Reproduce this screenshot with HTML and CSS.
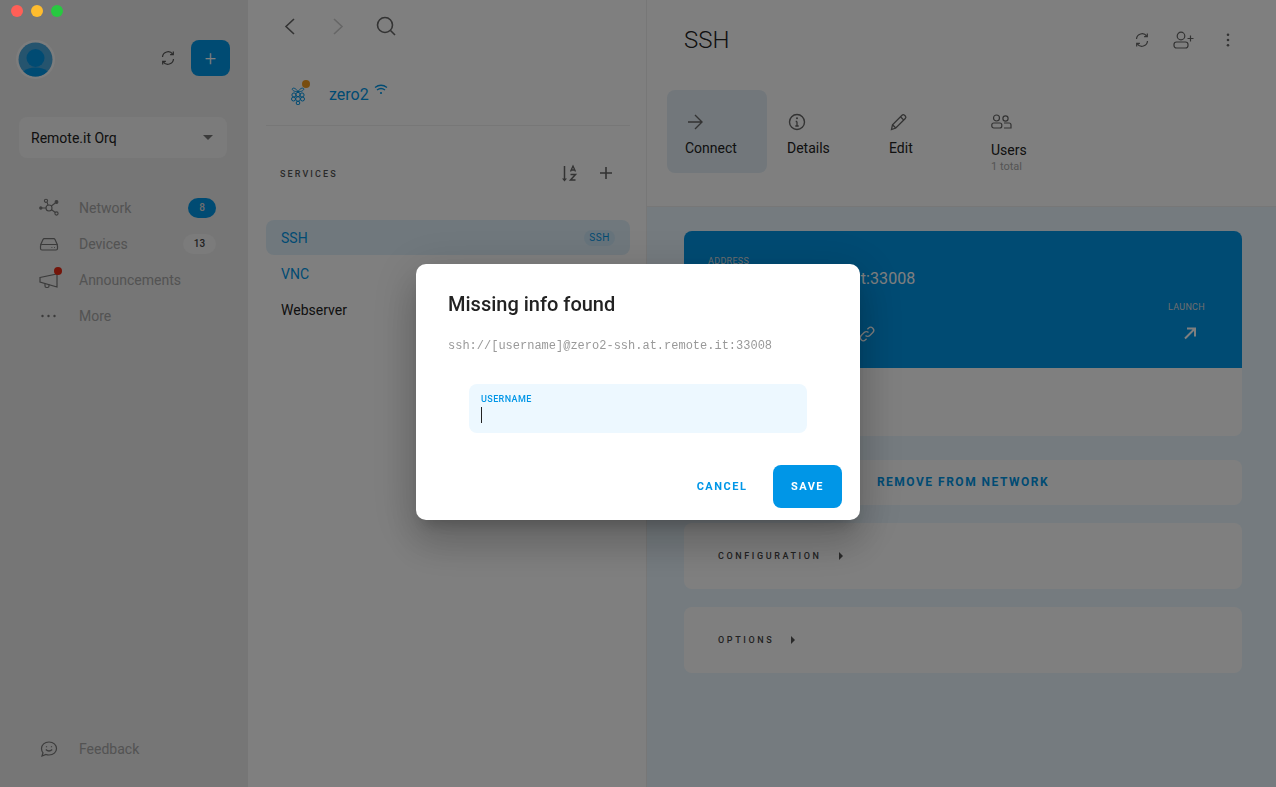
FILE: index.html
```html
<!DOCTYPE html>
<html lang="en">
<head>
  <meta charset="UTF-8" />
  <meta name="viewport" content="width=device-width, initial-scale=1.0" />
  <title>Remote.It</title>
  <link rel="stylesheet" href="styles.css">
</head>
<body>
  <div class="app">
    <aside class="sidebar">
      <div class="side-top">
        <svg class="avatar" width="39" height="39" viewBox="0 0 39 39">
          <circle cx="19.500" cy="19.500" r="19.500" fill="#fff" fill-opacity=".8"/>
          <circle cx="19.500" cy="19.500" r="17" fill="#4aa8dc"/>
          <circle cx="19.500" cy="18" r="9" fill="#0096e7"/>
          <path d="M7.500 31.500c3-3 7-4 12-4s9 1 12 4a17 17 0 0 1-24 0z" fill="#0096e7"/>
        </svg>
        <svg class="ico refresh" width="16" height="16" viewBox="0 0 16 16" fill="none" stroke="#555" stroke-width="1.200">
          <path d="M2.500 7A5.600 5.600 0 0 1 12.700 4.200M13.500 9A5.600 5.600 0 0 1 3.300 11.800"/>
          <path d="M13.300 1.500v3.200h-3.200M2.700 14.500v-3.200h3.200"/>
        </svg>
        <button class="add-btn">+</button>
      </div>

      <div class="org-select">
        <span>Remote.it Orq</span>
        <span class="caret-down"></span>
      </div>

      <nav class="side-nav">
        <div class="nav-row">
          <svg class="nav-ico" width="20" height="20" viewBox="0 0 20 20" fill="none" stroke="#777" stroke-width="1.100">
            <circle cx="10" cy="10" r="3"/><circle cx="1.800" cy="10" r="1.100" fill="#777"/><circle cx="7" cy="2.800" r="1.600"/><circle cx="17.500" cy="4" r="1.400" fill="#777"/><circle cx="17.500" cy="15.500" r="1.600"/>
            <path d="M3 10h4M8 4.200l1 3M16.300 5l-4 3M16.300 14.500l-4-3"/>
          </svg>
          <span class="nav-label">Network</span>
          <span class="badge badge-blue">8</span>
        </div>
        <div class="nav-row">
          <svg class="nav-ico" width="20" height="20" viewBox="0 0 20 20" fill="none" stroke="#777" stroke-width="1.200">
            <path d="M1.500 11l2.500-5.500q.4-.8 1.300-.8h9.400q.9 0 1.300.8l2.500 5.500"/>
            <rect x="1.500" y="10.500" width="17" height="5.500" rx="1.500"/>
            <path d="M12.500 13.500h.8M15 13.500h.8"/>
          </svg>
          <span class="nav-label">Devices</span>
          <span class="badge badge-gray">13</span>
        </div>
        <div class="nav-row">
          <span class="nav-ico-wrap">
            <svg class="nav-ico" width="20" height="20" viewBox="0 0 20 20" fill="none" stroke="#777" stroke-width="1.200">
              <path d="M1 7.500l17-3.500v13L1 12z"/><path d="M6 13.500v2.500q0 1.500 1.500 1.500h1q1.500 0 1.500-1.500v-1.500"/>
            </svg>
            <span class="red-dot"></span>
          </span>
          <span class="nav-label">Announcements</span>
        </div>
        <div class="nav-row">
          <svg class="nav-ico" width="20" height="20" viewBox="0 0 20 20" fill="#777">
            <circle cx="3.500" cy="10" r="1.200"/><circle cx="9.500" cy="10" r="1.200"/><circle cx="15.500" cy="10" r="1.200"/>
          </svg>
          <span class="nav-label">More</span>
        </div>
      </nav>

      <div class="nav-row side-bottom">
        <svg class="nav-ico" width="20" height="20" viewBox="0 0 20 20" fill="none" stroke="#777" stroke-width="1.200">
          <path d="M10 3c4.400 0 7.500 2.800 7.500 6.500S14.400 16 10 16q-1.600 0-3-.5L3 17l1-3.200Q2.500 12 2.500 9.500C2.500 5.800 5.600 3 10 3z"/>
          <path d="M6.800 10.500q3.200 3 6.400 0"/><path d="M7.500 7.300v1M12.500 7.300v1"/>
        </svg>
        <span class="nav-label">Feedback</span>
      </div>
    </aside>

    <section class="middle">
      <div class="top-nav">
        <span class="nav-btn">
          <svg width="24" height="24" viewBox="0 0 24 24" fill="none" stroke="#666" stroke-width="1.600"><path d="M16 5l-8 7.500 8 7.500"/></svg>
        </span>
        <span class="nav-btn">
          <svg width="24" height="24" viewBox="0 0 24 24" fill="none" stroke="#ccc" stroke-width="1.600"><path d="M8 5l8 7.500-8 7.500"/></svg>
        </span>
        <span class="nav-btn">
          <svg width="24" height="24" viewBox="0 0 24 24" fill="none" stroke="#666" stroke-width="1.600"><circle cx="11" cy="11" r="7.500"/><path d="M16.500 16.500l4.500 4.500"/></svg>
        </span>
      </div>

      <div class="device-row">
        <span class="device-ico">
          <svg width="16" height="20" viewBox="0 0 16 20" fill="none" stroke="#0096e7" stroke-width="1">
            <path d="M8 6.500C6 3.500 3.500 2.500 2.500 3.500S3.500 7 8 6.500zM8 6.500c2-3 4.500-4 5.500-3S12.500 7 8 6.500z"/>
            <circle cx="8" cy="9.500" r="2.200"/><circle cx="4" cy="10" r="2.100"/><circle cx="12" cy="10" r="2.100"/>
            <circle cx="3.500" cy="14" r="2"/><circle cx="12.500" cy="14" r="2"/><circle cx="8" cy="14" r="2.300"/><circle cx="8" cy="18" r="1.800"/>
          </svg>
          <span class="amber-dot"></span>
        </span>
        <span class="device-name">zero2</span>
        <svg class="wifi" width="14" height="12" viewBox="0 0 14 12" fill="none" stroke="#0096e7" stroke-width="1.400">
          <path d="M1 3.500Q7-1 13 3.500M3 6q4-3 8 0"/><circle cx="7" cy="9" r="1.100" fill="#0096e7" stroke="none"/>
        </svg>
      </div>
      <div class="divider"></div>

      <div class="services-head">
        <span class="services-title">SERVICES</span>
        <span class="services-tools">
          <svg width="24" height="24" viewBox="0 0 24 24" fill="none" stroke="#666" stroke-width="1.500">
            <path d="M7.500 5v13"/><path d="M5 17.500h5L7.500 20.500z" fill="#666" stroke="none"/>
            <path d="M13.500 10.500l2.500-5.500 2.500 5.500M14.300 9h3.400" stroke-width="1.300"/>
            <path d="M13.500 13.500h5l-5 5.500h5" stroke-width="1.500"/>
          </svg>
          <svg width="24" height="24" viewBox="0 0 24 24" fill="none" stroke="#666" stroke-width="1.600"><path d="M12 6v12M6 12h12"/></svg>
        </span>
      </div>

      <ul class="service-list">
        <li class="service active"><span>SSH</span><span class="chip">SSH</span></li>
        <li class="service link"><span>VNC</span></li>
        <li class="service"><span>Webserver</span></li>
      </ul>
    </section>

    <main class="detail">
      <header class="detail-head">
        <div class="title-row">
          <h1>SSH</h1>
          <div class="title-tools">
            <svg class="ico" width="16" height="16" viewBox="0 0 16 16" fill="none" stroke="#666" stroke-width="1.200">
              <path d="M2.500 7A5.600 5.600 0 0 1 12.700 4.200M13.500 9A5.600 5.600 0 0 1 3.300 11.800"/>
              <path d="M13.300 1.500v3.200h-3.200M2.700 14.500v-3.200h3.200"/>
            </svg>
            <svg class="ico" width="22" height="18" viewBox="0 0 22 18" fill="none" stroke="#666" stroke-width="1.200">
              <circle cx="8" cy="5" r="3.800"/><rect x="1" y="11" width="14" height="6" rx="2.500"/><path d="M17.500 4.500v6M14.500 7.500h6"/>
            </svg>
            <svg class="ico more-ico" width="16" height="16" viewBox="0 0 16 16" fill="#666">
              <circle cx="8" cy="2.800" r="1.300"/><circle cx="8" cy="8" r="1.300"/><circle cx="8" cy="13.200" r="1.300"/>
            </svg>
          </div>
        </div>
        <div class="tabs">
          <div class="tab selected">
            <svg width="24" height="24" viewBox="0 0 24 24" fill="none" stroke="#666" stroke-width="1.400"><path d="M3 12h13.500M10 5l7 7-7 7"/></svg>
            <span class="tab-label">Connect</span>
          </div>
          <div class="tab">
            <svg width="24" height="24" viewBox="0 0 24 24" fill="none" stroke="#666" stroke-width="1.400"><circle cx="10" cy="12" r="7.500"/><path d="M10 11.500v4.500M8.300 16h3.400M8.700 11.500H10" stroke-width="1.300"/><circle cx="10" cy="8.300" r="1" fill="#666" stroke="none"/></svg>
            <span class="tab-label">Details</span>
          </div>
          <div class="tab">
            <svg width="24" height="24" viewBox="0 0 24 24" fill="none" stroke="#666" stroke-width="1.300"><path d="M2.500 19.500l1-4.800L13 5.200q1.200-1.200 2.500 0l.8.800q1.200 1.300 0 2.500L6.800 18z"/><path d="M11.500 6.800l3.300 3.300M3.500 14.800l3.300 3.200"/></svg>
            <span class="tab-label">Edit</span>
          </div>
          <div class="tab">
            <svg width="24" height="24" viewBox="0 0 24 24" fill="none" stroke="#666" stroke-width="1.200"><circle cx="5.500" cy="8" r="3"/><circle cx="14.500" cy="8.500" r="2.600"/><rect x=".8" y="13" width="10" height="5" rx="2"/><path d="M13 13h5q2 0 2 2v3h-7"/></svg>
            <span class="tab-label users-label">Users</span>
            <span class="tab-sub">1 total</span>
          </div>
        </div>
      </header>

      <div class="detail-body">
        <div class="conn-card">
          <div class="conn-head">
            <span class="conn-small">ADDRESS</span>
            <span class="conn-address">zero2-ssh.at.remote.it:33008</span>
            <div class="conn-actions">
              <svg class="link-ico" width="18" height="18" viewBox="0 0 18 18" fill="none" stroke="#fff" stroke-width="1.300">
                <path d="M7.500 10.500a3 3 0 0 0 4.300 0l3-3a3 3 0 0 0-4.300-4.300L9.400 4.300"/>
                <path d="M10.500 7.500a3 3 0 0 0-4.300 0l-3 3a3 3 0 0 0 4.300 4.300l1.100-1.100"/>
              </svg>
              <div class="launch">
                <span class="conn-small">LAUNCH</span>
                <svg width="14" height="14" viewBox="0 0 14 14" fill="none" stroke="#fff" stroke-width="2"><path d="M2 12.500L12 2.500M4 2.500h8v8"/></svg>
              </div>
            </div>
          </div>
          <div class="conn-foot"></div>
        </div>

        <div class="card card-action">REMOVE FROM NETWORK</div>
        <div class="card card-section"><span>CONFIGURATION</span><span class="caret-right"></span></div>
        <div class="card card-section"><span>OPTIONS</span><span class="caret-right"></span></div>
      </div>
    </main>
  </div>

  <div class="backdrop">
    <div class="dialog">
      <h2>Missing info found</h2>
      <p class="dialog-url">ssh://[username]@zero2-ssh.at.remote.it:33008</p>
      <div class="field">
        <label>USERNAME</label>
        <span class="text-caret"></span>
      </div>
      <div class="dialog-actions">
        <button class="btn-text">CANCEL</button>
        <button class="btn-save">SAVE</button>
      </div>
    </div>
  </div>

  <div class="traffic">
    <span class="light red"></span>
    <span class="light yellow"></span>
    <span class="light green"></span>
  </div>
</body>
</html>
```

FILE: styles.css
```css
* {
  margin: 0;
  padding: 0;
  box-sizing: border-box;
  font-family: Roboto, 'Liberation Sans', sans-serif;
}

body {
  height: 100vh;
  overflow: hidden;
  background: white;
  color: #222;
}

button {
  border: none;
  cursor: pointer;
}

ul {
  list-style: none;
}

svg {
  display: block;
  flex-shrink: 0;
}

.app {
  display: flex;
  height: 100vh;
}

/* Sidebar */
.sidebar {
  width: 248px;
  flex-shrink: 0;
  display: flex;
  flex-direction: column;
  background: #ececec;
}

.side-top {
  display: flex;
  align-items: center;
  height: 36px;
  margin-top: 40px;
  padding: 0 18px 0 16px;
}

.avatar {
  margin: 3px auto 0 0;
}

.refresh {
  margin-right: 15px;
}

.add-btn {
  width: 39px;
  height: 36px;
  border-radius: 8px;
  background: #0096e7;
  color: white;
  font-size: 20px;
  font-weight: 300;
  line-height: 36px;
}

.org-select {
  display: flex;
  align-items: center;
  justify-content: space-between;
  width: 208px;
  height: 41px;
  margin: 41px 0 0 19px;
  padding: 0 14px 0 12px;
  border-radius: 8px;
  background: #f6f6f6;
  font-size: 14px;
  color: #222;
}

.caret-down {
  width: 0;
  height: 0;
  border-left: 5px solid transparent;
  border-right: 5px solid transparent;
  border-top: 5px solid #777;
}

.side-nav {
  margin-top: 32px;
}

.nav-row {
  display: flex;
  align-items: center;
  height: 36px;
  padding: 0 32px 0 39px;
}

.nav-ico-wrap {
  position: relative;
  display: block;
}

.nav-label {
  margin-left: 20px;
  font-size: 14px;
  color: #a6a6a6;
}

.badge {
  margin-left: auto;
  height: 20px;
  border-radius: 10px;
  font-size: 10px;
  font-weight: 500;
  line-height: 20px;
  text-align: center;
}

.badge-blue {
  width: 28px;
  background: #0096e7;
  color: #ddd;
}

.badge-gray {
  width: 33px;
  background: #f6f6f6;
  color: #444;
}

.red-dot {
  position: absolute;
  top: -3px;
  right: -3px;
  width: 8px;
  height: 8px;
  border-radius: 50%;
  background: #e82a14;
}

.side-bottom {
  margin-top: auto;
  margin-bottom: 20px;
}

/* Service list column */
.middle {
  width: 399px;
  flex-shrink: 0;
  padding: 0 16px 0 18px;
  background: white;
  border-right: 1px solid #eee;
}

.top-nav {
  display: flex;
  height: 52px;
}

.nav-btn {
  display: flex;
  align-items: center;
  justify-content: center;
  width: 48px;
  height: 52px;
}

.device-row {
  display: flex;
  align-items: center;
  height: 44px;
  margin-top: 20px;
  padding-left: 24px;
}

.device-ico {
  position: relative;
  display: block;
  margin-top: 2px;
}

.amber-dot {
  position: absolute;
  top: -5px;
  right: -4px;
  width: 8px;
  height: 8px;
  border-radius: 50%;
  background: #f19b1f;
}

.device-name {
  margin-left: 23px;
  font-size: 16px;
  color: #0096e7;
}

.wifi {
  margin: -8px 0 0 5px;
}

.divider {
  height: 1px;
  margin-top: 9px;
  background: #eee;
}

.services-head {
  display: flex;
  align-items: center;
  justify-content: space-between;
  height: 36px;
  margin-top: 30px;
  padding: 0 12px 0 14px;
}

.services-title {
  font-size: 9px;
  font-weight: 500;
  letter-spacing: 2.1px;
  color: #555;
}

.services-tools {
  display: flex;
  gap: 13px;
  margin-top: -2px;
}

.service-list {
  margin-top: 28px;
}

.service {
  display: flex;
  align-items: center;
  justify-content: space-between;
  height: 35px;
  margin-bottom: 1px;
  padding: 0 15px;
  border-radius: 8px;
  font-size: 14px;
  color: #222;
}

.service.active {
  background: #e1f1fb;
  color: #0096e7;
}

.service.link {
  color: #0096e7;
}

.chip {
  padding: 0 5px;
  height: 16px;
  border-radius: 8px;
  background: #cfe8f8;
  font-size: 10px;
  line-height: 16px;
  letter-spacing: 0.6px;
}

/* Detail column */
.detail {
  flex: 1;
  display: flex;
  flex-direction: column;
  background: #ebf7fe;
}

.detail-head {
  height: 207px;
  padding-top: 16px;
  background: white;
  border-bottom: 1px solid #eee;
}

.title-row {
  display: flex;
  align-items: center;
  justify-content: space-between;
  height: 48px;
  padding: 0 40px 0 37px;
}

.title-row h1 {
  font-size: 24px;
  font-weight: 300;
  color: #222;
}

.title-tools {
  display: flex;
  align-items: center;
  gap: 23px;
}

.more-ico {
  margin-left: 2px;
}

.tabs {
  display: flex;
  gap: 2px;
  margin-top: 26px;
  padding-left: 20px;
}

.tab {
  display: flex;
  flex-direction: column;
  width: 100px;
  height: 83px;
  padding: 20px 0 0 18px;
  border-radius: 8px;
}

.tab.selected {
  background: #e4eff7;
}

.tab-label {
  margin-top: 4px;
  font-size: 14px;
  line-height: 20px;
  color: #222;
}

.users-label {
  margin-top: 6px;
}

.tab-sub {
  font-size: 11px;
  line-height: 14px;
  color: #aaa;
}

.detail-body {
  padding: 24px 34px 0 37px;
}

.conn-card {
  margin-bottom: 24px;
}

.conn-head {
  display: flex;
  flex-direction: column;
  height: 137px;
  padding: 25px 37px 0 24px;
  border-radius: 8px 8px 0 0;
  background: #0096e7;
  color: white;
}

.conn-small {
  font-size: 9px;
  line-height: 10px;
  letter-spacing: 0.3px;
  color: #ddd;
}

.conn-address {
  margin-top: 1px;
  font-size: 16px;
  line-height: 24px;
  letter-spacing: 0.1px;
}

.conn-actions {
  display: flex;
  justify-content: space-between;
  align-items: flex-end;
  margin-top: 11px;
}

.link-ico {
  margin: 0 0 1px 150px;
}

.launch {
  display: flex;
  flex-direction: column;
}

.launch svg {
  margin: 14px 0 4px 15px;
}

.conn-foot {
  height: 68px;
  border-radius: 0 0 8px 8px;
  background: white;
}

.card {
  border-radius: 8px;
  background: white;
}

.card-action {
  height: 45px;
  margin-bottom: 18px;
  font-size: 12px;
  font-weight: 700;
  line-height: 44px;
  letter-spacing: 1.500px;
  text-align: center;
  color: #0096e7;
}

.card-section {
  display: flex;
  align-items: center;
  gap: 17px;
  height: 66px;
  margin-bottom: 18px;
  padding-left: 34px;
  font-size: 9px;
  font-weight: 500;
  letter-spacing: 2.600px;
  color: #444;
}

.caret-right {
  width: 0;
  height: 0;
  border-top: 4px solid transparent;
  border-bottom: 4px solid transparent;
  border-left: 4px solid #555;
}

/* Modal */
.backdrop {
  position: fixed;
  inset: 0;
  display: flex;
  align-items: center;
  justify-content: center;
  background: rgba(0, 0, 0, 0.5);
}

.dialog {
  width: 444px;
  height: 256px;
  margin-top: -3px;
  padding: 28px 18px 12px 32px;
  border-radius: 10px;
  background: white;
  box-shadow: 0 11px 15px -7px rgba(0, 0, 0, 0.2), 0 24px 38px 3px rgba(0, 0, 0, 0.14), 0 9px 46px 8px rgba(0, 0, 0, 0.12);
}

.dialog h2 {
  font-size: 20px;
  font-weight: 500;
  line-height: 24px;
  color: #222;
}

.dialog-url {
  margin-top: 21px;
  font-family: 'Liberation Mono', monospace;
  font-size: 12px;
  line-height: 18px;
  color: #999;
}

.field {
  display: flex;
  flex-direction: column;
  width: 338px;
  height: 49px;
  margin: 29px 0 0 21px;
  padding: 9px 12px 0;
  border-radius: 8px;
  background: #edf8ff;
}

.field label {
  font-size: 9px;
  font-weight: 500;
  line-height: 12px;
  letter-spacing: 0.4px;
  color: #0096e7;
}

.text-caret {
  width: 1px;
  height: 16px;
  margin-top: 2px;
  background: #222;
}

.dialog-actions {
  display: flex;
  justify-content: flex-end;
  gap: 8px;
  margin-top: 32px;
}

.btn-text,
.btn-save {
  height: 43px;
  border-radius: 8px;
  font-size: 11px;
  font-weight: 700;
  letter-spacing: 1.500px;
}

.btn-text {
  width: 86px;
  background: white;
  color: #0096e7;
}

.btn-save {
  width: 69px;
  background: #0096e7;
  color: white;
}

/* Window controls stay lit above the modal */
.traffic {
  position: fixed;
  top: 5px;
  left: 11px;
  display: flex;
  gap: 8px;
}

.light {
  width: 12px;
  height: 12px;
  border-radius: 50%;
}

.red {
  background: #ff5f57;
}

.yellow {
  background: #febc2e;
}

.green {
  background: #28c840;
}
```
